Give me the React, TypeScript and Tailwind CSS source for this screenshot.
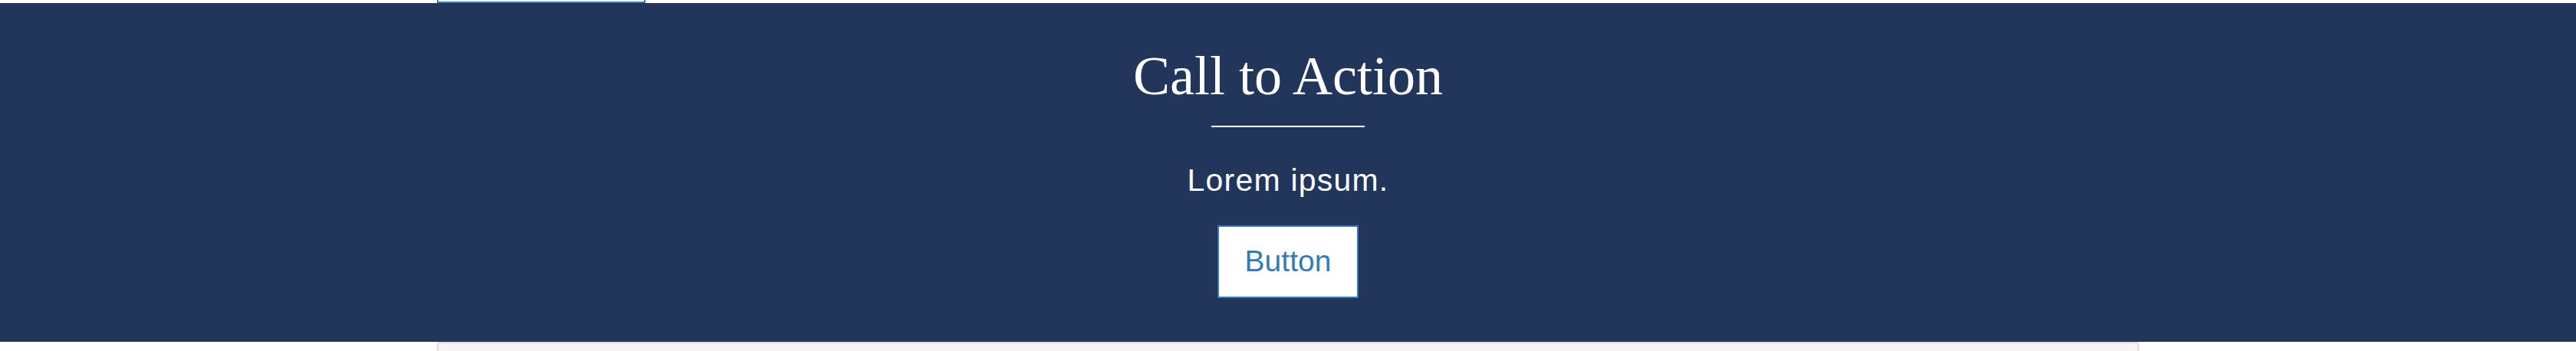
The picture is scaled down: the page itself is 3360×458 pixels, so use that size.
const App = () => {
  return (
    <main className="min-h-screen w-full bg-white">
      {/* tab left over from the section above */}
      <div className="mx-auto w-[2220px]">
        <div className="h-1 w-[272px] border-x-2 border-b-2 border-[#337ab7] bg-white" />
      </div>

      <section className="flex h-[442px] w-full flex-col items-center bg-[#22365c] pt-[59px]">
        <h1 className="font-['Liberation_Serif',serif] text-[72px] font-normal leading-[72px] text-white">
          Call to Action
        </h1>
        <div className="mt-[29px] h-[2px] w-[200px] bg-white" />
        <p className="mt-[49px] font-['Liberation_Sans',Arial,sans-serif] text-[41px] leading-[41px] tracking-[1.2px] text-white">
          Lorem ipsum.
        </p>
        <button
          type="button"
          className="mt-[38px] h-[95px] w-[184px] border-2 border-[#337ab7] bg-white pb-[3px] font-['Liberation_Sans',Arial,sans-serif] text-[39px] leading-[39px] text-[#337ab7]"
        >
          Button
        </button>
      </section>

      <div className="mx-auto h-3 w-[2220px] border-x-2 border-t-2 border-[#dddddd] bg-[#f5f5f5]" />
    </main>
  );
};

export default App;
